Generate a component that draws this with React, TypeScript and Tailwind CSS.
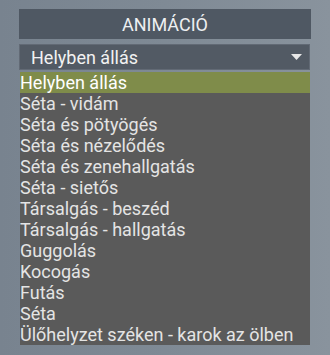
import { useState } from "react";

const options = [
  "Helyben állás",
  "Séta - vidám",
  "Séta és pötyögés",
  "Séta és nézelődés",
  "Séta és zenehallgatás",
  "Séta - sietős",
  "Társalgás - beszéd",
  "Társalgás - hallgatás",
  "Guggolás",
  "Kocogás",
  "Futás",
  "Séta",
  "Ülőhelyzet széken - karok az ölben",
];

const App = () => {
  const [selected, setSelected] = useState(0);

  return (
    <div
      className="w-[330px] h-[355px] overflow-hidden bg-gradient-to-r from-[#78838f] via-[#7f8a95] to-[#89939d] pt-[9px] pl-[19px]"
      style={{ fontFamily: "Roboto, 'Noto Sans', sans-serif" }}
    >
      <div className="w-[292px] h-[30px] bg-[#4f5863] flex items-center justify-center text-[18px] text-[#eef0f2]">
        ANIMÁCIÓ
      </div>

      {/* Select */}
      <div className="mt-[5px] w-[291px] h-[26px] bg-[#525a64] border border-[#626a75] flex items-center justify-between pl-[11px] pr-[7px] text-[18px] text-[#f2f2f2]">
        <span>{options[selected]}</span>
        <svg width="11" height="6" viewBox="0 0 11 6">
          <polygon points="0,0 11,0 5.5,6" fill="#e8e8e8" />
        </svg>
      </div>

      {/* Dropdown list */}
      <ul className="mt-[2px] ml-px w-[290px] bg-[#5a5a5a] text-[18px] leading-[21px]">
        {options.map((o, i) => (
          <li
            key={o}
            onClick={() => setSelected(i)}
            className={
              i === selected
                ? "h-[21px] bg-[#7f8c4a] text-white whitespace-nowrap"
                : "h-[21px] text-[#e4e4e4] whitespace-nowrap"
            }
          >
            {o}
          </li>
        ))}
      </ul>
    </div>
  );
};

export default App;
